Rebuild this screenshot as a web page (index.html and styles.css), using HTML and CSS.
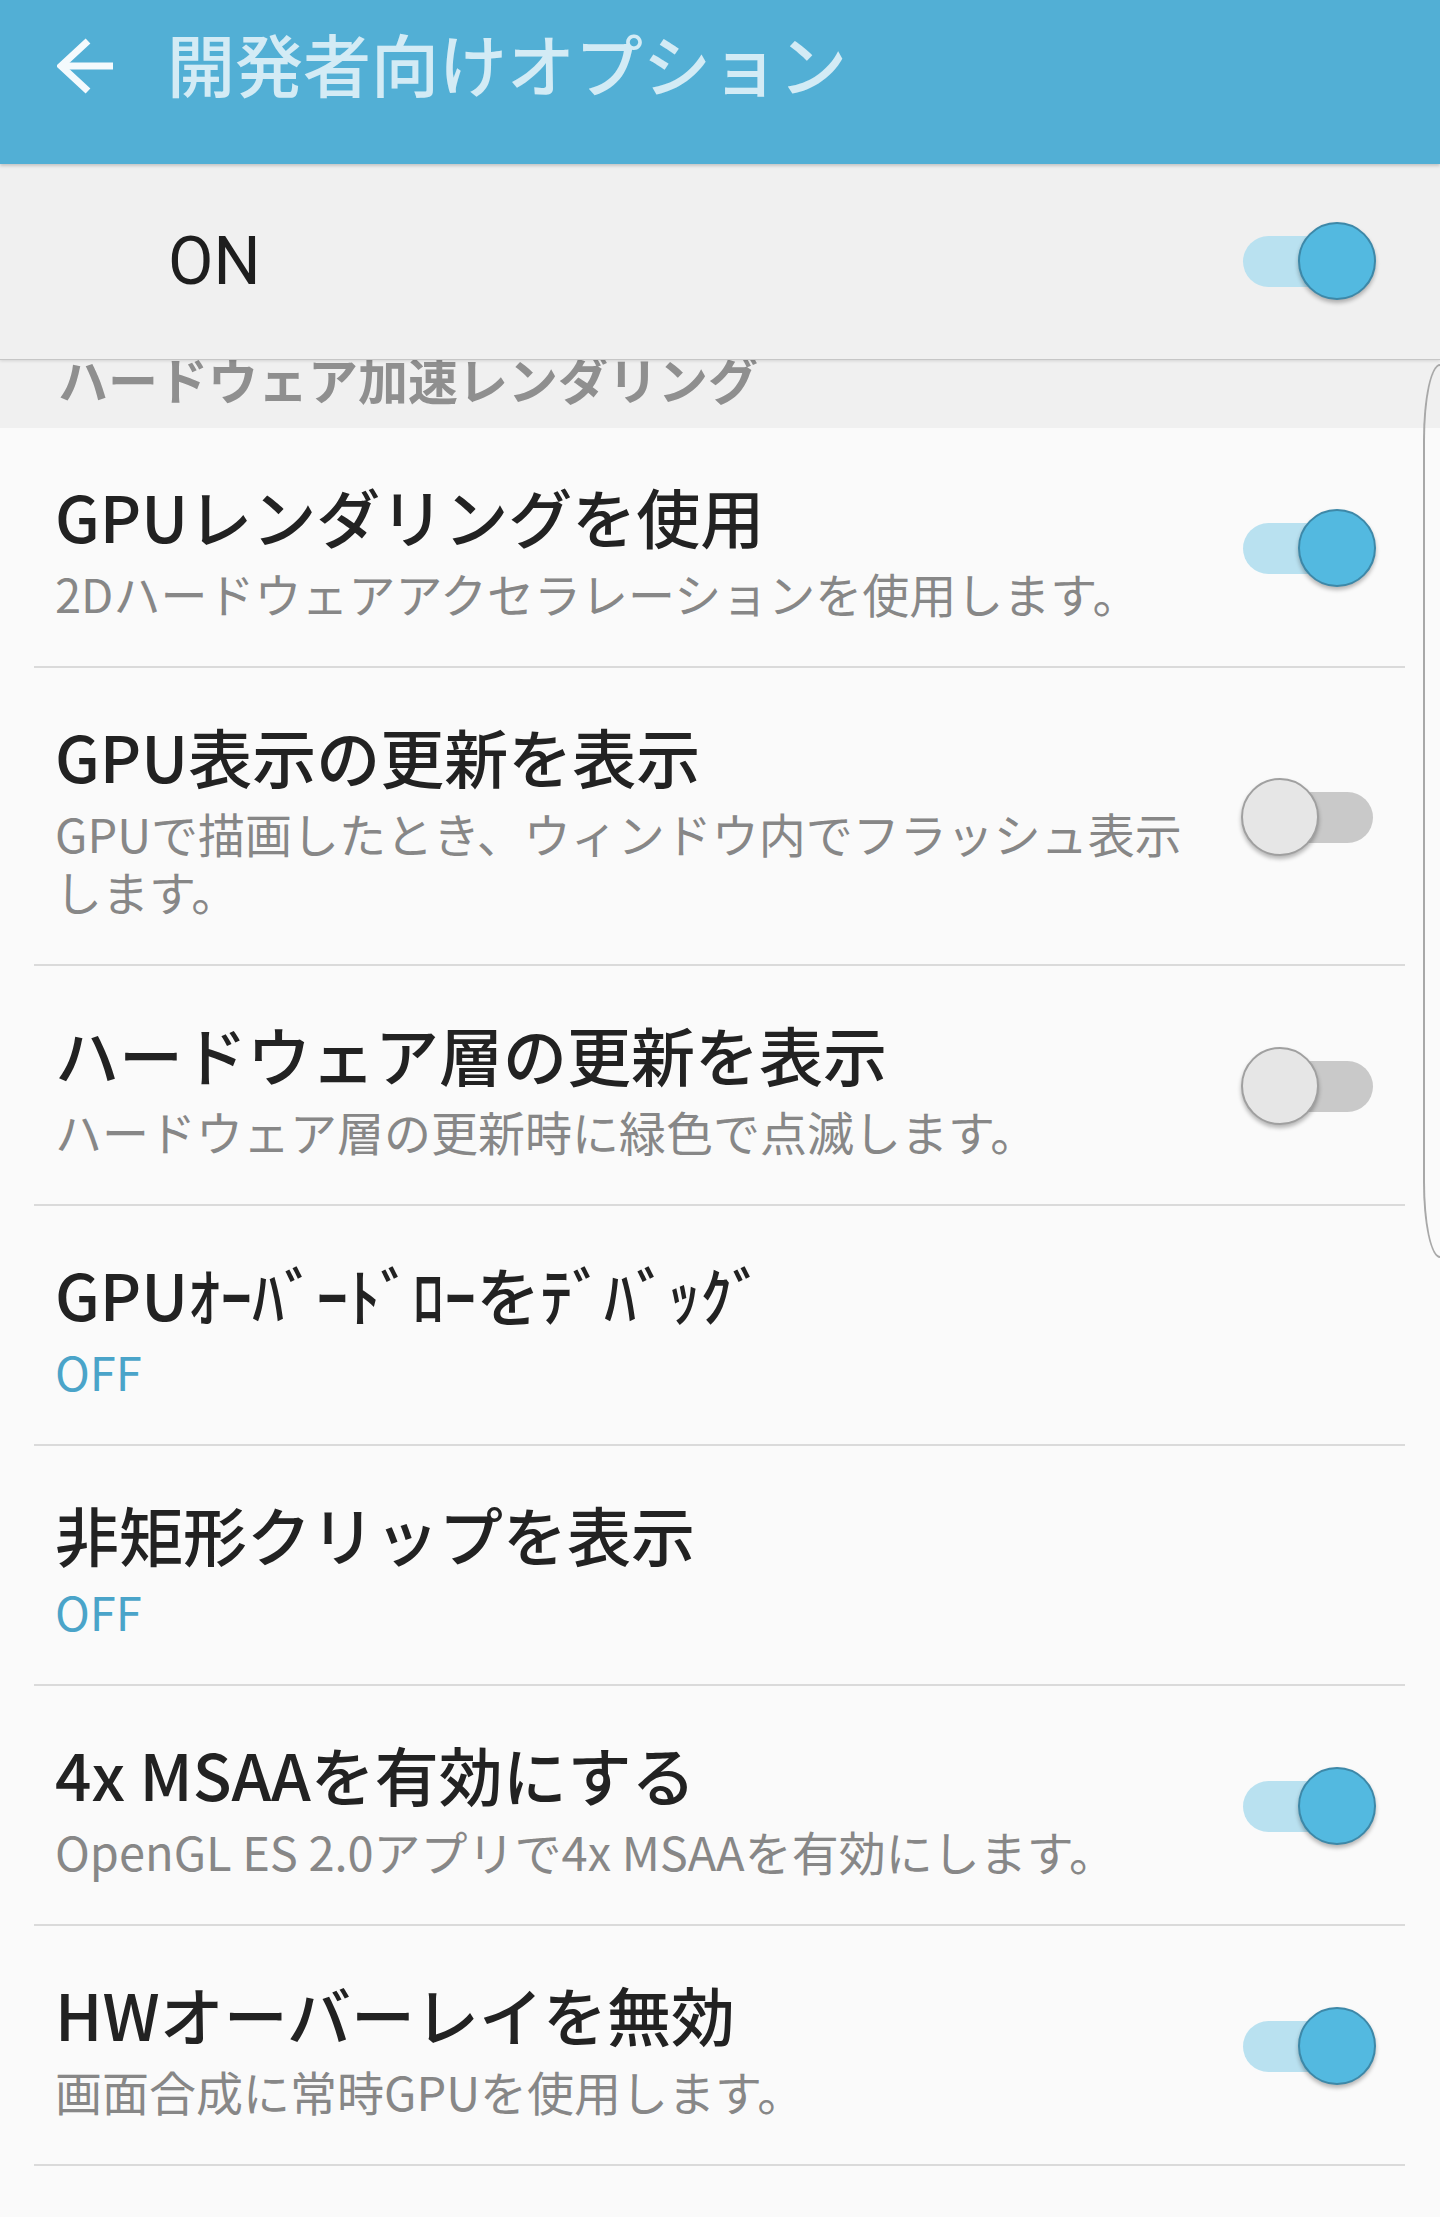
FILE: index.html
```html
<!DOCTYPE html>
<html lang="ja">
<head>
    <meta charset="UTF-8">
    <meta name="viewport" content="width=device-width, initial-scale=1.0">
    <title>開発者向けオプション</title>
    <link rel="stylesheet" href="styles.css">
</head>
<body>
    <div class="screen">
        <header class="app-bar">
            <svg class="back-icon" viewBox="0 0 56 56" aria-hidden="true">
                <polyline points="31,3 4,28 31,53" />
                <line x1="4" y1="28" x2="56" y2="28" />
            </svg>
            <h1>開発者向けオプション</h1>
        </header>

        <div class="master-row">
            <span class="master-label">ON</span>
            <div class="toggle on"><span class="track"></span><span class="knob"></span></div>
        </div>

        <div class="section-title"><span>ハードウェア加速レンダリング</span></div>

        <div class="list">
            <div class="item">
                <div class="texts">
                    <div class="item-title">GPUレンダリングを使用</div>
                    <div class="item-sub">2Dハードウェアアクセラレーションを使用します。</div>
                </div>
                <div class="toggle on"><span class="track"></span><span class="knob"></span></div>
            </div>

            <div class="item">
                <div class="texts">
                    <div class="item-title">GPU表示の更新を表示</div>
                    <div class="item-sub">GPUで描画したとき、ウィンドウ内でフラッシュ表示<br>します。</div>
                </div>
                <div class="toggle"><span class="track"></span><span class="knob"></span></div>
            </div>

            <div class="item">
                <div class="texts">
                    <div class="item-title">ハードウェア層の更新を表示</div>
                    <div class="item-sub">ハードウェア層の更新時に緑色で点滅します。</div>
                </div>
                <div class="toggle"><span class="track"></span><span class="knob"></span></div>
            </div>

            <div class="item">
                <div class="texts">
                    <div class="item-title">GPUｵｰﾊﾞｰﾄﾞﾛｰをﾃﾞﾊﾞｯｸﾞ</div>
                    <div class="item-sub value">OFF</div>
                </div>
            </div>

            <div class="item">
                <div class="texts">
                    <div class="item-title">非矩形クリップを表示</div>
                    <div class="item-sub value">OFF</div>
                </div>
            </div>

            <div class="item">
                <div class="texts">
                    <div class="item-title">4x MSAAを有効にする</div>
                    <div class="item-sub">OpenGL ES 2.0アプリで4x MSAAを有効にします。</div>
                </div>
                <div class="toggle on"><span class="track"></span><span class="knob"></span></div>
            </div>

            <div class="item">
                <div class="texts">
                    <div class="item-title">HWオーバーレイを無効</div>
                    <div class="item-sub">画面合成に常時GPUを使用します。</div>
                </div>
                <div class="toggle on"><span class="track"></span><span class="knob"></span></div>
            </div>
        </div>

        <div class="edge-handle"></div>
    </div>
</body>
</html>
```

FILE: styles.css
```css
:root {
    --bar-blue: #52afd5;
    --bar-title: #d3ebf5;
    --page-bg: #fafafa;
    --panel-bg: #f0f0f0;
    --text-main: #222222;
    --text-sub: #878787;
    --accent: #4aa4c9;
    --divider: #dadada;
}

* {
    margin: 0;
    padding: 0;
    box-sizing: border-box;
}

body {
    background-color: var(--page-bg);
    font-family: "Noto Sans CJK JP", "Noto Sans", sans-serif;
    color: var(--text-main);
    overflow-x: hidden;
}

.screen {
    position: relative;
    min-height: 2217px;
    background-color: var(--page-bg);
}

/* top bar */
.app-bar {
    position: relative;
    z-index: 3;
    display: flex;
    align-items: flex-start;
    height: 164px;
    padding: 23px 0 0 57px;
    background-color: var(--bar-blue);
    box-shadow: 0 2px 3px rgba(0, 0, 0, 0.18);
}

.back-icon {
    width: 56px;
    height: 56px;
    margin-top: 15px;
    fill: none;
    stroke: #f4fafd;
    stroke-width: 7;
}

.app-bar h1 {
    margin-left: 54px;
    font-size: 68px;
    line-height: 80px;
    font-weight: 500;
    color: var(--bar-title);
}

/* master switch */
.master-row {
    position: relative;
    z-index: 2;
    display: flex;
    align-items: center;
    justify-content: space-between;
    height: 196px;
    padding: 0 64px 0 168px;
    background-color: var(--panel-bg);
    border-bottom: 1px solid #c6c6c6;
    box-shadow: 0 1px 3px rgba(0, 0, 0, 0.12);
}

.master-label {
    font-family: Roboto, "Liberation Sans", sans-serif;
    font-size: 66px;
    line-height: 66px;
    color: #1e1e1e;
}

/* section header, scrolled under the master row */
.section-title {
    height: 68px;
    overflow: hidden;
    padding-left: 58px;
    background-color: var(--panel-bg);
}

.section-title span {
    display: block;
    margin-top: -7px;
    font-size: 50px;
    line-height: 50px;
    font-weight: 700;
    color: #8f8f8f;
}

/* rows */
.item {
    display: flex;
    align-items: center;
    justify-content: space-between;
    margin: 0 35px 0 34px;
    padding: 47px 29px 44px 21px;
    border-bottom: 2px solid var(--divider);
}

.item-title {
    font-size: 64px;
    line-height: 80px;
    font-weight: 500;
    color: var(--text-main);
    white-space: nowrap;
}

.item-sub {
    margin-top: 9px;
    font-size: 47px;
    line-height: 58px;
    color: var(--text-sub);
}

.item-sub.value {
    color: var(--accent);
}

/* switch */
.toggle {
    position: relative;
    flex-shrink: 0;
    width: 136px;
    height: 80px;
}

.toggle .track {
    position: absolute;
    left: 3px;
    right: 3px;
    top: 14px;
    height: 51px;
    border-radius: 26px;
    background-color: #c9c9c9;
}

.toggle .knob {
    position: absolute;
    top: 0;
    left: 1px;
    width: 78px;
    height: 78px;
    border-radius: 50%;
    background-color: #e6e6e6;
    border: 2px solid #a0a0a0;
    box-shadow: 0 3px 4px rgba(0, 0, 0, 0.28);
}

.toggle.on .track {
    background-color: #b9e1f0;
}

.toggle.on .knob {
    left: auto;
    right: 0;
    background-color: #53b9e0;
    border-color: #3d88a8;
}

/* edge panel handle on the right border */
.edge-handle {
    position: absolute;
    top: 364px;
    right: 0;
    width: 17px;
    height: 894px;
    border: 2px solid #a8a8a8;
    border-right: none;
    border-radius: 17px 0 0 17px / 76px 0 0 76px;
}
```
